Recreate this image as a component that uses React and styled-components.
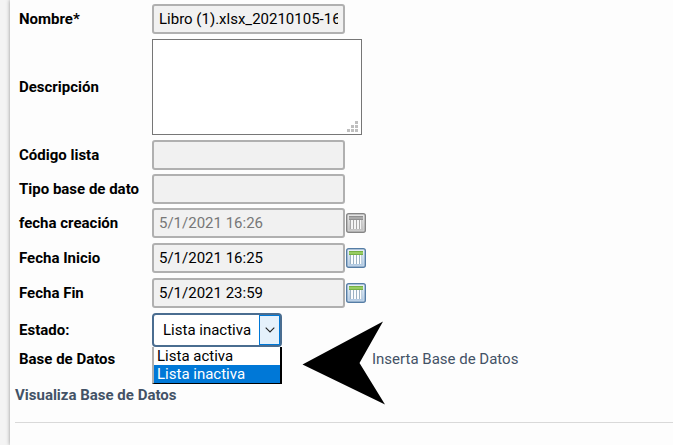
import React, { useState } from 'react';
import styled, { createGlobalStyle } from 'styled-components';

const estados = ['Lista activa', 'Lista inactiva'];

const CalendarIcon = ({ id, disabled }) => {
    const c = disabled
        ? { edge: '#858585', from: '#e2e2e2', to: '#bcbcbc', top: '#8f8f8f', light: '#a9a9a9', body: '#f4f4f4', line: '#a6a6a6' }
        : { edge: '#557da5', from: '#e4eef8', to: '#a9c4df', top: '#76b043', light: '#97cc62', body: '#fbfdfe', line: '#9db3c4' };

    return (
        <svg width='20' height='20' viewBox='0 0 20 20' aria-hidden='true'>
            <defs>
                <linearGradient id={`${id}-fill`} x1='0' y1='0' x2='0' y2='1'>
                    <stop offset='0' stopColor={c.from} />
                    <stop offset='1' stopColor={c.to} />
                </linearGradient>
            </defs>
            <rect x='0.75' y='0.75' width='18.5' height='18.5' rx='2' fill={`url(#${id}-fill)`} stroke={c.edge} strokeWidth='1.5' />
            <rect x='2' y='2' width='16' height='16' fill='none' stroke='#fff' strokeOpacity='0.35' />
            <rect x='3' y='3' width='14' height='4' fill={c.top} />
            <rect x='3' y='4' width='14' height='2' fill={c.light} />
            <rect x='4' y='7' width='12' height='9' fill={c.body} />
            <path d='M4.5 7v9M7.5 7v9M10.5 7v9M13.5 7v9' stroke={c.line} strokeWidth='1' />
            <path d='M15.5 7v9' stroke={c.line} strokeOpacity='0.6' />
        </svg>
    );
};

const DateField = ({ id, label, value, disabled }) => {
    const [date, setDate] = useState(value);

    return (
        <DateRow>
            <Label htmlFor={id}>{label}</Label>
            <TextInput id={id} value={date} disabled={disabled} onChange={e => setDate(e.target.value)} />
            <CalendarButton type='button' aria-label={`Calendario ${label}`} disabled={disabled}>
                <CalendarIcon id={id} disabled={disabled} />
            </CalendarButton>
        </DateRow>
    );
};

const App = () => {
    const [estado, setEstado] = useState('Lista inactiva');

    return (
        <>
            <GlobalStyle />
            <Panel>
                <Form>
                    <Row>
                        <Label htmlFor='nombre'>Nombre*</Label>
                        <TextInput id='nombre' defaultValue='Libro (1).xlsx_20210105-16:25' />
                    </Row>
                    <TextRow>
                        <Label htmlFor='descripcion'>Descripción</Label>
                        <AreaWrap>
                            <TextArea id='descripcion' />
                            <Grip width='11' height='11' viewBox='0 0 11 11' aria-hidden='true'>
                                <path d='M8 0h3v3h-3zM4 4h3v3h-3zM8 4h3v3h-3zM0 8h3v3h-3zM4 8h3v3h-3zM8 8h3v3h-3z' fill='#bfbfbf' />
                            </Grip>
                        </AreaWrap>
                    </TextRow>
                    <Row>
                        <Label htmlFor='codigo'>Código lista</Label>
                        <TextInput id='codigo' />
                    </Row>
                    <Row>
                        <Label htmlFor='tipo'>Tipo base de dato</Label>
                        <TextInput id='tipo' />
                    </Row>
                    <DateField id='creacion' label='fecha creación' value='5/1/2021 16:26' disabled />
                    <DateField id='inicio' label='Fecha Inicio' value='5/1/2021 16:25' />
                    <DateField id='fin' label='Fecha Fin' value='5/1/2021 23:59' />
                    <Row>
                        <Label htmlFor='estado'>Estado:</Label>
                        <SelectWrap>
                            <Select id='estado' value={estado} onChange={e => setEstado(e.target.value)}>
                                {estados.map(item => <option key={item}>{item}</option>)}
                            </Select>
                            <SelectArrow>
                                <svg width='10' height='6' viewBox='0 0 10 6' aria-hidden='true'>
                                    <path d='M0.7 0.7 5 5 9.3 0.7' fill='none' stroke='#222' strokeWidth='1.1' />
                                </svg>
                            </SelectArrow>
                            <Menu role='listbox' aria-label='Estado'>
                                {estados.map(item => (
                                    <MenuItem
                                        key={item}
                                        role='option'
                                        aria-selected={item === estado}
                                        $active={item === estado}
                                        onClick={() => setEstado(item)}
                                    >
                                        {item}
                                    </MenuItem>
                                ))}
                            </Menu>
                            <Pointer width='84' height='84' viewBox='0 0 84 84' aria-hidden='true'>
                                <path d='M0.5 43.5 81 0.5 57.5 42 83 83.5Z' fill='#000' />
                            </Pointer>
                        </SelectWrap>
                    </Row>
                    <BaseRow>
                        <Caption>Base de Datos</Caption>
                        <InsertLink href='#inserta'>Inserta Base de Datos</InsertLink>
                    </BaseRow>
                </Form>
                <Footer>
                    <ViewLink href='#visualiza'>Visualiza Base de Datos</ViewLink>
                </Footer>
            </Panel>
        </>
    );
};

export default App;

const GlobalStyle = createGlobalStyle`
  * {
    box-sizing: border-box;
  }
  body {
    margin: 0;
    background-color: #f4f4f4;
    color: #000;
    font-family: Roboto, sans-serif;
    font-size: 15px;
    line-height: 18px;
    overflow-x: hidden;
  }
  input, textarea, select, button {
    font: inherit;
    color: inherit;
  }
`;

const Panel = styled.main`
  min-height: 100vh;
  margin-left: 10px;
  padding: 4px 0 0 5px;
  background-color: #fdfdfd;
  box-shadow: 0 0 4px rgba(0, 0, 0, 0.4);
`;

const Form = styled.form`
  display: flex;
  flex-direction: column;
  gap: 4px;
  padding-left: 4px;
`;

const Row = styled.div`
  display: flex;
  align-items: center;
`;

const TextRow = styled(Row)`
  padding: 1px 0;
`;

const DateRow = styled(Row)`
  padding-bottom: 1px;
`;

const BaseRow = styled(Row)`
  padding-bottom: 19px;
  line-height: 16px;
`;

const Label = styled.label`
  flex: 0 0 133px;
  font-weight: bold;
`;

const Caption = styled.span`
  flex: 0 0 133px;
  font-weight: bold;
`;

const TextInput = styled.input.attrs({ type: 'text' })`
  width: 193px;
  height: 30px;
  padding: 0 5px;
  border: 2px solid #b0b0b0;
  border-radius: 3px;
  background-color: #f1f1f1;
  &:disabled {
    color: #777;
  }
`;

const AreaWrap = styled.div`
  position: relative;
  display: flex;
`;

const TextArea = styled.textarea`
  width: 210px;
  height: 96px;
  padding: 4px;
  border: 1px solid #767676;
  background-color: #fff;
  resize: none;
`;

const Grip = styled.svg`
  position: absolute;
  right: 4px;
  bottom: 3px;
`;

const CalendarButton = styled.button`
  display: flex;
  margin-left: 1px;
  padding: 0;
  border: none;
  background: none;
`;

const SelectWrap = styled.div`
  position: relative;
  display: flex;
`;

const Select = styled.select`
  width: 130px;
  height: 34px;
  padding: 0 24px 0 9px;
  appearance: none;
  border: 2px solid #4a6d90;
  border-radius: 4px;
  background-color: #fff;
  outline: none;
`;

const SelectArrow = styled.span`
  position: absolute;
  top: 2px;
  right: 2px;
  bottom: 2px;
  width: 21px;
  display: flex;
  align-items: center;
  justify-content: center;
  border: 1px solid #0078d7;
  background-color: #e5f1fb;
  pointer-events: none;
`;

const Menu = styled.ul`
  position: absolute;
  top: 100%;
  left: 0;
  width: 100%;
  margin: 0;
  padding: 0;
  list-style: none;
  background-color: #fff;
  border: solid;
  border-width: 0 2px 1px 2px;
  border-color: #b0b0b0 #000 #000 #b0b0b0;
`;

const MenuItem = styled.li`
  padding-left: 3px;
  background-color: ${({ $active }) => $active ? '#0078d7' : '#fff'};
  color: ${({ $active }) => $active ? '#fff' : '#000'};
`;

const Pointer = styled.svg`
  position: absolute;
  top: 8px;
  left: 150px;
  pointer-events: none;
`;

const InsertLink = styled.a`
  padding-left: 220px;
  color: #435266;
  text-decoration: none;
`;

const Footer = styled.div`
  padding-bottom: 18px;
  border-bottom: 1px solid #d9d9d9;
`;

const ViewLink = styled.a`
  color: #435266;
  font-weight: bold;
  text-decoration: none;
`;
